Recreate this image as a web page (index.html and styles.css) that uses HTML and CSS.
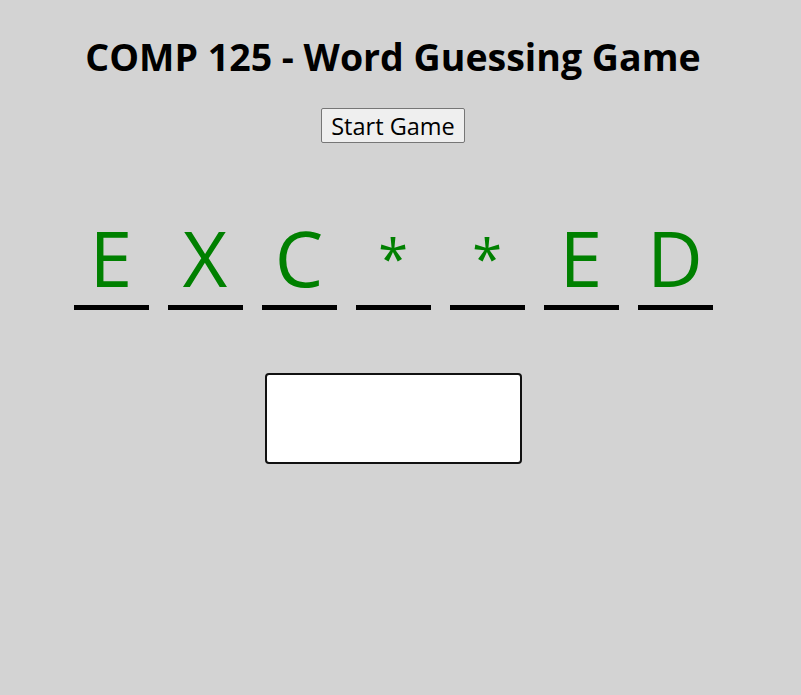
FILE: index.html
```html
<!DOCTYPE html>
<html>
<head>
<meta charset="utf-8">
<title>Word Guessing Game</title>
<link rel="stylesheet" href="styles.css">
</head>
<body>
<div class="page">
  <h1 class="title">COMP 125 - Word Guessing Game</h1>
  <div class="controls"><button class="start">Start Game</button></div>
  <div class="word">
    <div class="slot">E</div>
    <div class="slot">X</div>
    <div class="slot">C</div>
    <div class="slot star">*</div>
    <div class="slot star">*</div>
    <div class="slot">E</div>
    <div class="slot">D</div>
  </div>
  <div class="guess-row"><input class="guess" type="text"></div>
</div>
</body>
</html>
```
FILE: styles.css
```css
html, body {
  margin: 0;
  padding: 0;
  background: #d3d3d3;
}
body {
  font-family: "Open Sans", "DejaVu Sans", sans-serif;
}
.page {
  width: 786px;
  display: flex;
  flex-direction: column;
  align-items: center;
}
.title {
  margin: 34px 0 0;
  font-size: 37.5px;
  font-weight: 700;
  line-height: 46px;
  color: #000;
}
.controls {
  margin-top: 28px;
}
.start {
  font-family: inherit;
  font-size: 23.5px;
  height: 35px;
  padding: 0 9px;
  background: #efefef;
  border: 1px solid #767676;
  border-radius: 2px;
  color: #000;
}
.word {
  margin-top: 77px;
  display: flex;
  gap: 19px;
}
.slot {
  width: 75px;
  height: 90px;
  box-sizing: border-box;
  border-bottom: 5px solid #000;
  color: #008000;
  font-size: 77px;
  line-height: 76px;
  text-align: center;
}
.star {
  font-size: 54px;
}
.guess-row {
  margin-top: 63px;
}
.guess {
  width: 257px;
  height: 91px;
  box-sizing: border-box;
  border: 2px solid #111;
  border-radius: 4px;
  background: #fff;
  display: block;
}
```
